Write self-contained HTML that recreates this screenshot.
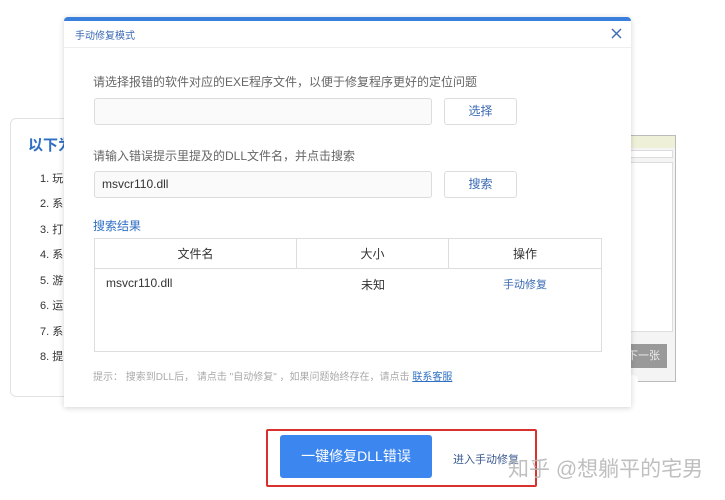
<!DOCTYPE html>
<html><head><meta charset="utf-8"><style>
*{margin:0;padding:0;box-sizing:border-box}
body{width:725px;height:500px;background:#fff;position:relative;overflow:hidden;font-family:"Liberation Sans","Noto Sans CJK SC",sans-serif;color:#333}
.a{position:absolute;white-space:nowrap}
.card{position:absolute;left:10px;top:118px;width:300px;height:279px;border:1px solid #e2e2e2;border-radius:6px;background:#fff}
.li{position:absolute;left:40px;font-size:11px;color:#333}
.dlg{position:absolute;left:64px;top:17px;width:567px;height:390px;background:#fff;border-top:4px solid #3b7fdc;border-radius:4px 4px 0 0;box-shadow:0 1px 6px rgba(0,0,0,.18)}
.inp{position:absolute;border:1px solid #dcdcdc;border-radius:3px;background:#fafafa;height:27px}
.btn{position:absolute;border:1px solid #dcdcdc;border-radius:3px;background:#fff;height:27px;width:73px;text-align:center;line-height:25px;font-size:12px;color:#3a6ab3}
</style></head><body>
<div class="card"></div>
<div class="a" style="left:28px;top:134px;font-size:15px;font-weight:bold;color:#2f6fc4">以下为</div>
<div class="li" style="top:170px">1. 玩</div>
<div class="li" style="top:195px">2. 系</div>
<div class="li" style="top:221px">3. 打</div>
<div class="li" style="top:246px">4. 系</div>
<div class="li" style="top:272px">5. 游</div>
<div class="li" style="top:297px">6. 运</div>
<div class="li" style="top:323px">7. 系</div>
<div class="li" style="top:348px">8. 提</div>
<div style="position:absolute;left:620px;top:135px;width:56px;height:247px;border:1px solid #bbb;background:#f4f4f4">
 <div style="height:12px;background:#eef0d8"></div>
 <div style="margin:2px;height:8px;background:#fff;border:1px solid #ddd"></div>
 <div style="margin:4px 2px;height:170px;background:#fff;border:1px solid #ddd"></div>
 <div style="position:absolute;left:0;top:208px;width:46px;height:24px;background:#999;color:#eee;font-size:11px;line-height:24px;padding-left:6px">下一张 <span style="display:inline-block;width:11px;height:11px;border-radius:50%;background:#fff;vertical-align:middle"></span></div>
</div>
<div class="dlg">
 <div class="a" style="left:11px;top:6px;font-size:10px;color:#3a6ab3">手动修复模式</div>
 <svg style="position:absolute;left:547px;top:7px" width="11" height="11" viewBox="0 0 11 11"><path d="M1 1L10 10M10 1L1 10" stroke="#3a6ab3" stroke-width="1.4" fill="none"/></svg>
 <div style="position:absolute;left:0;top:26px;width:567px;border-top:1px solid #eee"></div>
 <div class="a" style="left:29px;top:52px;font-size:12px;color:#666">请选择报错的软件对应的EXE程序文件，以便于修复程序更好的定位问题</div>
 <div class="inp" style="left:30px;top:77px;width:338px"></div>
 <div class="btn" style="left:380px;top:77px">选择</div>
 <div class="a" style="left:29px;top:126px;font-size:12px;color:#666">请输入错误提示里提及的DLL文件名，并点击搜索</div>
 <div class="inp" style="left:30px;top:150px;width:338px;font-size:12px;line-height:25px;padding-left:7px;color:#333">msvcr110.dll</div>
 <div class="btn" style="left:380px;top:150px">搜索</div>
 <div class="a" style="left:29px;top:196px;font-size:12px;color:#2f6fc4">搜索结果</div>
 <div style="position:absolute;left:30px;top:217px;width:508px;height:114px;border:1px solid #ddd">
  <div style="height:30px;border-bottom:1px solid #ddd;display:flex;font-size:12px;line-height:30px;text-align:center">
   <div style="width:202px;border-right:1px solid #ddd">文件名</div>
   <div style="width:152px;border-right:1px solid #ddd">大小</div>
   <div style="flex:1">操作</div>
  </div>
  <div class="a" style="left:11px;top:37px;font-size:12px">msvcr110.dll</div>
  <div class="a" style="left:266px;top:37px;font-size:12px">未知</div>
  <div class="a" style="left:408px;top:37px;font-size:11px;color:#3a6ab3">手动修复</div>
 </div>
 <div class="a" style="left:29px;top:347px;font-size:10px;color:#aaa">提示： 搜索到DLL后， 请点击 "自动修复" ，如果问题始终存在，请点击 <span style="color:#2f6fc4;text-decoration:underline">联系客服</span></div>
</div>
<div style="position:absolute;left:266px;top:429px;width:271px;height:58px;border:2px solid #d9322e;border-radius:2px"></div>
<div style="position:absolute;left:280px;top:435px;width:152px;height:43px;background:#3c86f0;border-radius:3px;color:#fff;font-size:14px;text-align:center;line-height:43px">一键修复DLL错误</div>
<div class="a" style="left:453px;top:451px;font-size:11px;color:#3a5a90">进入手动修复</div>
<div class="a" style="left:508px;top:453px;font-size:21px;color:rgba(180,180,180,.85)">知乎 @想躺平的宅男</div>
</body></html>
